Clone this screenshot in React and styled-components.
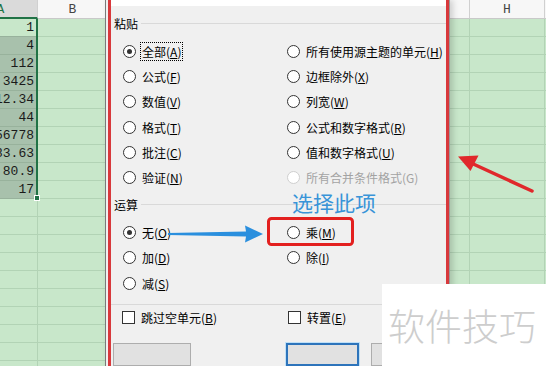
import React from "react";
import styled, { createGlobalStyle } from "styled-components";

const SHEET = "#c8e7ca";
const GRID = "#b2d3b5";
const XL_GREEN = "#217346";
const RED = "#d8393c";

const GlobalStyle = createGlobalStyle`
  html, body {
    margin: 0;
    padding: 0;
    background: #fff;
  }
  body {
    font-family: "Noto Sans CJK SC", "Noto Sans", sans-serif;
  }
`;

const pasteLeft = [
  { text: "全部", key: "A", checked: true, focused: true },
  { text: "公式", key: "F" },
  { text: "数值", key: "V" },
  { text: "格式", key: "T" },
  { text: "批注", key: "C" },
  { text: "验证", key: "N" },
];
const pasteRight = [
  { text: "所有使用源主题的单元", key: "H" },
  { text: "边框除外", key: "X" },
  { text: "列宽", key: "W" },
  { text: "公式和数字格式", key: "R" },
  { text: "值和数字格式", key: "U" },
  { text: "所有合并条件格式", key: "G", disabled: true },
];
const operations = [
  { text: "无", key: "O", checked: true },
  { text: "加", key: "D" },
  { text: "减", key: "S" },
  { text: "乘", key: "M" },
  { text: "除", key: "I" },
];
const values = ["1", "4", "112", "3425", "12.34", "44", "56778", "83.63", "80.9", "17"];

const Option = ({ item }) => (
  <OptionItem $disabled={item.disabled}>
    <Radio $checked={item.checked} $disabled={item.disabled} />
    <OptionLabel $focused={item.focused}>
      {item.text}(
      {item.disabled ? item.key : <Key>{item.key}</Key>})
    </OptionLabel>
  </OptionItem>
);

const App = () => {
  return (
    <>
      <GlobalStyle />
      <Screen>
        <SheetPane $width={141} $offset={-36}>
          <Column $width={74}>
            <ColHead $selected>A</ColHead>
            <Selection>
              {values.map((v, i) => (
                <Cell key={v} $active={i === 0} $selected $noRight>
                  {v}
                </Cell>
              ))}
              <FillHandle />
            </Selection>
            {Array.from({ length: 10 }).map((_, i) => (
              <Cell key={i} />
            ))}
          </Column>
          <Column $width={70}>
            <ColHead>B</ColHead>
            {Array.from({ length: 20 }).map((_, i) => (
              <Cell key={i} />
            ))}
          </Column>
        </SheetPane>

        <Dialog>
          <DialogBody>
            <TopStrip />
            <SectionHeader $top={10}>粘贴</SectionHeader>
            <OptionGrid $rows={6}>
              {[...pasteLeft, ...pasteRight].map((item) => (
                <Option key={item.key} item={item} />
              ))}
            </OptionGrid>
            <SectionHeader $top={7}>运算</SectionHeader>
            <OptionGrid $rows={3}>
              {operations.map((item) => (
                <Option key={item.key} item={item} />
              ))}
            </OptionGrid>
            <Divider />
            <CheckRow>
              <OptionItem>
                <CheckBox />
                <OptionLabel>
                  跳过空单元(<Key>B</Key>)
                </OptionLabel>
              </OptionItem>
              <OptionItem>
                <CheckBox />
                <OptionLabel>
                  转置(<Key>E</Key>)
                </OptionLabel>
              </OptionItem>
            </CheckRow>
            <ButtonRow>
              <DialogButton $w={78} aria-label="粘贴链接(L)" />
              <DialogButton $w={73} $gap={95} $primary aria-label="确定" />
              <DialogButton $w={73} $gap={12} aria-label="取消" />
            </ButtonRow>
          </DialogBody>
        </Dialog>

        <SheetPane $width={96}>
          <Column $width={20}>
            <ColHead />
            {Array.from({ length: 20 }).map((_, i) => (
              <Cell key={i} />
            ))}
          </Column>
          <Column $width={75}>
            <ColHead>H</ColHead>
            {Array.from({ length: 20 }).map((_, i) => (
              <Cell key={i} />
            ))}
          </Column>
          <Column $width={20}>
            <ColHead />
            {Array.from({ length: 20 }).map((_, i) => (
              <Cell key={i} />
            ))}
          </Column>
        </SheetPane>

        <Marks viewBox="0 0 546 366" width="546" height="366">
          <rect x="268.5" y="218.5" width="84" height="26" rx="3" fill="none" stroke="#e3201f" strokeWidth="3" />
          <polygon points="168,233 246,231.5 245,225.5 263,234 245,242.5 246,236.5 168,235" fill="#2a8fde" />
          <line x1="532" y1="191" x2="470" y2="162.5" stroke="#e0282b" strokeWidth="3.5" strokeLinecap="round" />
          <polygon points="458,156.5 478.5,155.5 470.5,171" fill="#e0282b" />
        </Marks>
        <Callout>选择此项</Callout>
        <Watermark>软件技巧</Watermark>
      </Screen>
    </>
  );
};

const Screen = styled.div`
  position: relative;
  display: flex;
  width: 546px;
  height: 366px;
  overflow: hidden;
  background: ${SHEET};
`;

const SheetPane = styled.div`
  flex: none;
  display: flex;
  width: ${(p) => p.$width}px;
  margin-left: ${(p) => p.$offset || 0}px;
  height: 100%;
  overflow: hidden;
`;

const Column = styled.div`
  flex: none;
  display: flex;
  flex-direction: column;
  width: ${(p) => p.$width}px;
`;

const ColHead = styled.div`
  flex: none;
  box-sizing: border-box;
  height: 19px;
  padding-top: 3px;
  line-height: 14px;
  text-align: center;
  font-family: "Liberation Mono", monospace;
  font-size: 13px;
  color: ${(p) => (p.$selected ? XL_GREEN : "#444")};
  background: ${(p) => (p.$selected ? "#dadada" : "#f7f7f7")};
  border-right: 1px solid #d0d0d0;
  border-bottom: ${(p) => (p.$selected ? `2px solid ${XL_GREEN}` : "1px solid #c9c9c9")};
`;

const Selection = styled.div`
  position: relative;
  flex: none;
  display: flex;
  flex-direction: column;
  box-sizing: border-box;
  height: 180px;
  border-right: 2px solid ${XL_GREEN};
  border-bottom: 2px solid ${XL_GREEN};
`;

const FillHandle = styled.span`
  position: absolute;
  right: -4px;
  bottom: -4px;
  width: 4px;
  height: 4px;
  background: ${XL_GREEN};
  border: 1px solid #fff;
`;

const Cell = styled.div`
  flex: none;
  display: flex;
  align-items: flex-end;
  justify-content: flex-end;
  box-sizing: border-box;
  height: 18px;
  padding: 0 2px 1px 0;
  font-family: "Liberation Mono", monospace;
  font-size: 13px;
  line-height: 15px;
  color: #1a1a1a;
  white-space: nowrap;
  background: ${(p) => (p.$selected && !p.$active ? "#a8c1ac" : "transparent")};
  border-right: ${(p) => (p.$noRight ? "none" : `1px solid ${GRID}`)};
  border-bottom: 1px solid ${(p) => (p.$selected ? "#98b29c" : GRID)};
`;

const Dialog = styled.div`
  position: relative;
  z-index: 1;
  flex: none;
  display: flex;
  box-sizing: border-box;
  width: 345px;
  height: 100%;
  padding-left: 2px;
  background: #f0f0f0;
  border-left: 1px solid #7a7a7a;
  border-right: 1px solid #9a9a9a;
  box-shadow: 3px 0 6px rgba(0, 0, 0, 0.16);
`;

const DialogBody = styled.div`
  flex: 1;
  display: flex;
  flex-direction: column;
  border-left: 3px solid ${RED};
  border-right: 3px solid ${RED};
  font-size: 12px;
  color: #000;
`;

const TopStrip = styled.div`
  flex: none;
  height: 6px;
  background: #fff;
`;

const SectionHeader = styled.div`
  display: flex;
  align-items: center;
  gap: 3px;
  padding: ${(p) => p.$top}px 0 7px 3px;
  line-height: 16px;
  &::after {
    content: "";
    flex: 1;
    margin-top: -1px;
    border-top: 1px solid #d9d9d9;
  }
`;

const OptionGrid = styled.div`
  display: grid;
  grid-template-columns: 164px 1fr;
  grid-template-rows: repeat(${(p) => p.$rows}, 25.2px);
  grid-auto-flow: column;
  padding-left: 12px;
`;

const OptionItem = styled.div`
  display: flex;
  align-items: center;
  gap: 2px;
  white-space: nowrap;
  color: ${(p) => (p.$disabled ? "#a3a3a3" : "#000")};
`;

const Radio = styled.span`
  flex: none;
  display: flex;
  align-items: center;
  justify-content: center;
  box-sizing: border-box;
  width: 13px;
  height: 13px;
  margin-right: 2px;
  border-radius: 50%;
  border: 1px solid ${(p) => (p.$disabled ? "#cfcfcf" : "#333")};
  background: #fff;
  &::after {
    content: "";
    display: ${(p) => (p.$checked ? "block" : "none")};
    width: 5px;
    height: 5px;
    border-radius: 50%;
    background: #333;
  }
`;

const CheckBox = styled.span`
  flex: none;
  box-sizing: border-box;
  width: 13px;
  height: 13px;
  margin-right: 2px;
  border: 1px solid #333;
  background: #fff;
`;

const OptionLabel = styled.span`
  padding: 0 1px;
  line-height: 17px;
  border: 1px dotted ${(p) => (p.$focused ? "#000" : "transparent")};
`;

const Key = styled.span`
  text-decoration: underline;
`;

const Divider = styled.div`
  margin-top: 8px;
  border-top: 1px solid #d9d9d9;
`;

const CheckRow = styled.div`
  display: grid;
  grid-template-columns: 166px 1fr;
  align-items: center;
  height: 40px;
  padding-left: 11px;
`;

const ButtonRow = styled.div`
  display: flex;
  margin-top: 12px;
  padding-left: 2px;
`;

const DialogButton = styled.button`
  flex: none;
  box-sizing: border-box;
  width: ${(p) => p.$w}px;
  height: 23px;
  margin-left: ${(p) => p.$gap || 0}px;
  padding: 0;
  background: #e1e1e1;
  border: ${(p) => (p.$primary ? "2px solid #2d74bb" : "1px solid #adadad")};
  box-shadow: ${(p) => (p.$primary ? "0 0 0 1px #bfe0f7" : "none")};
`;

const Marks = styled.svg`
  position: absolute;
  top: 0;
  left: 0;
  pointer-events: none;
  z-index: 2;
`;

const Callout = styled.div`
  position: absolute;
  left: 292px;
  top: 192px;
  z-index: 2;
  font-size: 21px;
  line-height: 21px;
  color: #3994d8;
  white-space: nowrap;
`;

const Watermark = styled.div`
  position: absolute;
  left: 382px;
  top: 284px;
  right: 0;
  bottom: 0;
  z-index: 3;
  display: flex;
  align-items: center;
  padding-left: 6px;
  background: #fff;
  font-size: 37px;
  font-weight: 300;
  line-height: 37px;
  color: #cdcdcd;
  white-space: nowrap;
`;

export default App;
